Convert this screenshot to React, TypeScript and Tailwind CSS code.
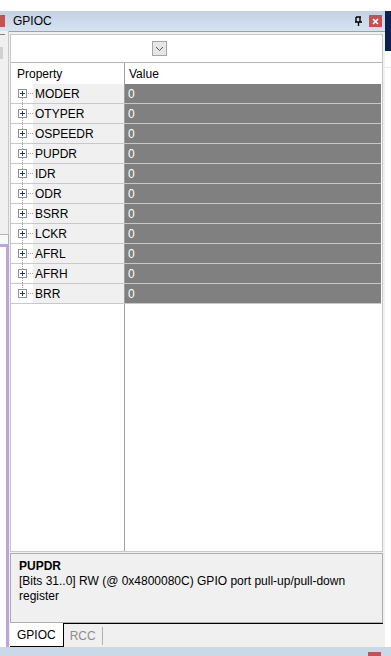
import React from 'react';

const registers = ['MODER', 'OTYPER', 'OSPEEDR', 'PUPDR', 'IDR', 'ODR', 'BSRR', 'LCKR', 'AFRL', 'AFRH', 'BRR'];

function PlusBox() {
  return (
    <svg width="9" height="9" viewBox="0 0 9 9" className="shrink-0">
      <rect x="0.5" y="0.5" width="8" height="8" fill="#fff" stroke="#919191" />
      <path d="M2 4.5h5M4.5 2v5" stroke="#1e3a78" strokeWidth="1" />
    </svg>
  );
}

function RegisterRow({ name, first, last }: { name: string; first: boolean; last: boolean }) {
  return (
    <div className="flex h-[20px] border-b border-[#c8c8c8]">
      {/* tree gutter */}
      <div className="relative w-[22px] shrink-0 bg-white">
        <div
          className={`absolute left-[11px] w-0 border-l border-dotted border-[#a0a0a0] ${first ? 'top-[10px]' : 'top-0'} ${last ? 'h-[10px]' : 'bottom-0'}`}
        />
        <div className="absolute left-[12px] top-[9px] w-[10px] border-t border-dotted border-[#a0a0a0]" />
        <div className="absolute left-[7px] top-[5px]">
          <PlusBox />
        </div>
      </div>
      <div className="flex w-[91px] shrink-0 items-center bg-[#f0f0f0] pl-[2px] text-[12px] text-black">
        {name}
      </div>
      <div className="w-px shrink-0 bg-[#a0a0a0]" />
      <div className="flex flex-1 items-center bg-[#808080] pl-[3px] text-[12px] text-white">0</div>
    </div>
  );
}

export default function App() {
  return (
    <div
      className="flex h-[656px] w-[391px] flex-col overflow-hidden bg-white"
      style={{ fontFamily: '"Liberation Sans", Arial, sans-serif' }}
    >
      <div className="flex min-h-0 flex-1">
        {/* left neighbour panel sliver */}
        <div className="flex w-[9px] shrink-0 flex-col pt-[11px]">
          <div className="flex h-[20px] items-start bg-gradient-to-b from-[#c2d1e3] to-[#d6e3f1] pt-[4px]">
            <div className="h-[12px] w-[5px] bg-[#c75050]" />
          </div>
          <div className="flex h-[203px] flex-col border-r border-[#c8c8c8] bg-[#f0f0f0] pt-[3px]">
            <div className="h-px w-[5px] bg-[#808080]" />
            <div className="mt-[12px] h-[12px] w-[3px] bg-[#d0d0d0]" />
          </div>
          <div className="h-[10px] border-r border-t border-[#b0b0b0] bg-[#f8f8f8]" />
          <div className="flex-1 border-r-[3px] border-t-[3px] border-[#b9a7dc] bg-white" />
        </div>

        {/* GPIOC panel */}
        <div className="flex w-[376px] shrink-0 flex-col pt-[11px]">
          <div className="flex h-[20px] shrink-0 items-center bg-gradient-to-b from-[#c2d1e3] to-[#d6e3f1] pl-[4px] pr-[3px]">
            <span className="text-[12px] text-black">GPIOC</span>
            <div className="ml-auto flex items-center gap-[6px]">
              <svg width="9" height="11" viewBox="0 0 9 11">
                <path d="M2 1h5M2 1v5M6 1v5M1 6h7M4.5 6v4" stroke="#000" strokeWidth="1.4" fill="none" />
              </svg>
              <div className="flex h-[12px] w-[13px] items-center justify-center bg-[#c75050]">
                <svg width="7" height="7" viewBox="0 0 7 7">
                  <path d="M1 1l5 5M6 1l-5 5" stroke="#fff" strokeWidth="1.6" />
                </svg>
              </div>
            </div>
          </div>

          <div className="flex min-h-0 flex-1 flex-col border-t border-[#a0a0a0] bg-[#f0f0f0] pl-[1px] pr-[2px] pt-[2px]">
            {/* property grid */}
            <div className="flex min-h-0 flex-1 flex-col border border-[#c8c8c8] bg-white">
              <div className="flex h-[27px] shrink-0 items-center pl-[141px]">
                <div className="flex h-[15px] w-[15px] items-center justify-center border border-[#a6a6a6] bg-[#e6e6e6]">
                  <svg width="9" height="6" viewBox="0 0 9 6">
                    <path d="M1 1l3.5 3.5L8 1" stroke="#555" strokeWidth="1" fill="none" />
                  </svg>
                </div>
              </div>
              <div className="h-px shrink-0 bg-[#b4b4b4]" />
              <div className="flex min-h-0 flex-1 flex-col">
                <div className="flex h-[21px] shrink-0 text-[12px] text-black">
                  <div className="flex w-[113px] shrink-0 items-center pl-[6px]">Property</div>
                  <div className="w-px shrink-0 bg-[#a0a0a0]" />
                  <div className="flex flex-1 items-center pl-[4px]">Value</div>
                </div>
                <div className="flex min-h-0 flex-1 flex-col pr-[1px]">
                  {registers.map((r, i) => (
                    <RegisterRow key={r} name={r} first={i === 0} last={i === registers.length - 1} />
                  ))}
                  <div className="flex flex-1">
                    <div className="w-[113px] shrink-0" />
                    <div className="w-px shrink-0 bg-[#a0a0a0]" />
                  </div>
                </div>
              </div>
            </div>

            {/* description */}
            <div className="mt-[1px] h-[70px] shrink-0 border border-[#adadad] bg-[#f0f0f0] px-[8px] pt-[5px] text-[12px] leading-[15px] text-black">
              <div className="font-bold">PUPDR</div>
              <div>[Bits 31..0] RW (@ 0x4800080C) GPIO port pull-up/pull-down register</div>
            </div>

            {/* tabs */}
            <div className="flex h-[24px] shrink-0 items-stretch text-[12px]">
              <div className="flex items-center border-b border-r border-black bg-white px-[7px] text-black">GPIOC</div>
              <div className="flex flex-1 items-center border-t border-black">
                <span className="border-r border-[#b0b0b0] px-[6px] text-[#8c8c8c]">RCC</span>
              </div>
            </div>
          </div>
        </div>

        {/* right neighbour sliver */}
        <div className="flex w-[6px] shrink-0 flex-col pt-[11px]">
          <div className="h-[40px] bg-[#0a2152]" />
          <div className="mt-[16px] h-px bg-[#e8e8e8]" />
        </div>
      </div>

      <div className="flex h-[9px] shrink-0 items-end justify-end bg-[#cbd8e7] pr-[10px]">
        <div className="h-[4px] w-[13px] bg-[#c75050]" />
      </div>
    </div>
  );
}
